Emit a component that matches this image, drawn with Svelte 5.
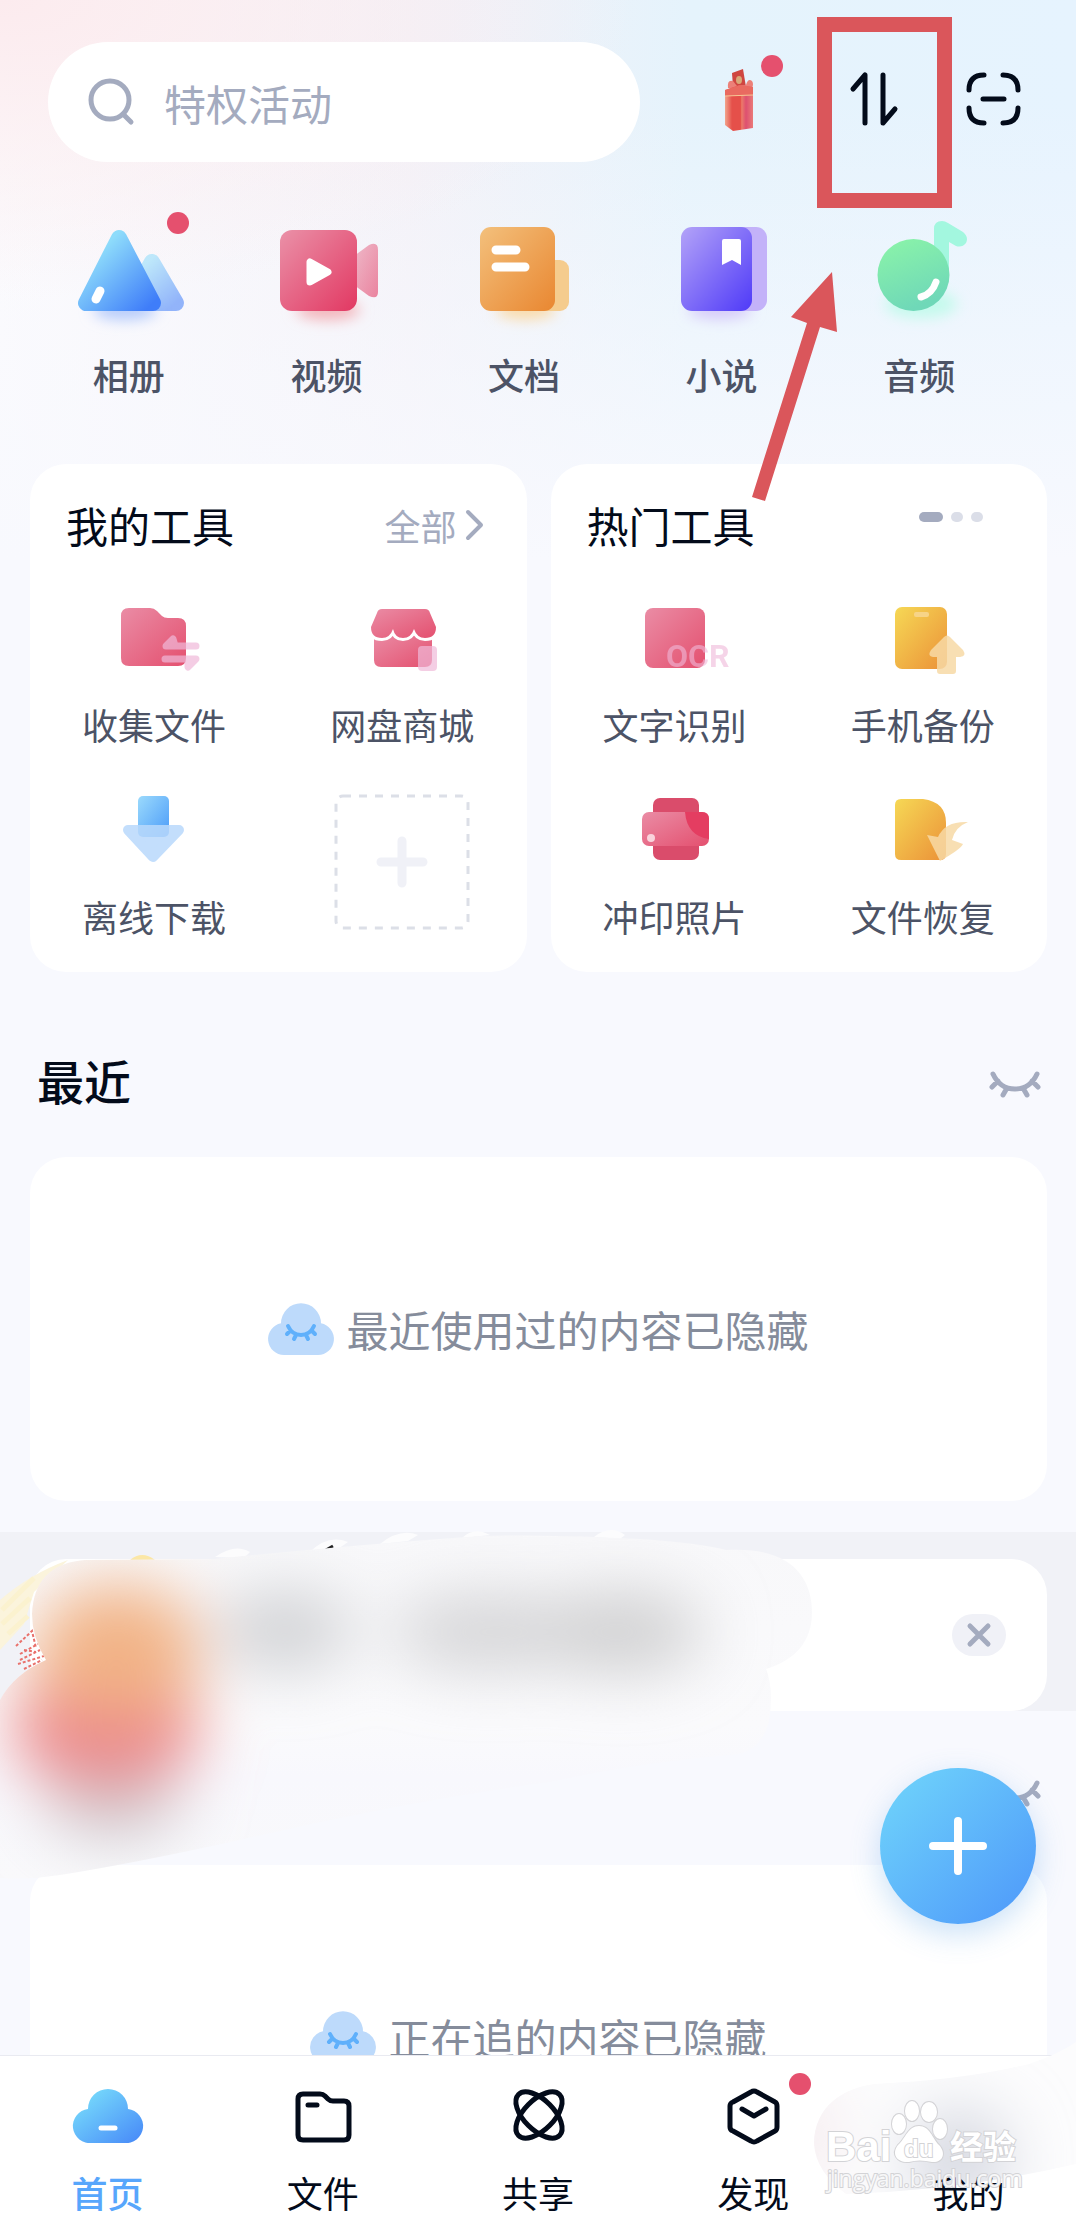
<script>
	const shortcuts = [
		{ id: 'photo', label: '相册', badge: true },
		{ id: 'video', label: '视频' },
		{ id: 'doc', label: '文档' },
		{ id: 'novel', label: '小说' },
		{ id: 'audio', label: '音频' }
	];
	const myTools = [
		{ id: 'collect', label: '收集文件' },
		{ id: 'shop', label: '网盘商城' },
		{ id: 'download', label: '离线下载' }
	];
	const hotTools = [
		{ id: 'ocr', label: '文字识别' },
		{ id: 'backup', label: '手机备份' },
		{ id: 'print', label: '冲印照片' },
		{ id: 'restore', label: '文件恢复' }
	];
	const tabs = [
		{ id: 'home', label: '首页' },
		{ id: 'files', label: '文件' },
		{ id: 'share', label: '共享' },
		{ id: 'discover', label: '发现', badge: true },
		{ id: 'mine', label: '我的' }
	];
	let current = $state('home');
	let keyword = $state('');
</script>

{#snippet eye()}
	<svg class="eye" viewBox="0 0 52 26">
		<path d="M4 3Q11 18 26 18Q41 18 48 3M9 10L3 16M18 17L14 24M34 17L38 24M43 10L49 16" />
	</svg>
{/snippet}

{#snippet hiddenTip(text)}
	<div class="panel">
		<svg class="cloud" viewBox="0 0 66 52">
			<path d="M16 52A16 16 0 0 1 13 20.3A20 20 0 0 1 53 20.3A16 16 0 0 1 50 52Z" fill="#bddafb" />
			<path
				d="M20 23Q24 32 33 32Q42 32 46 23M22 28L19 31M28 32L26 36M38 32L40 36M44 28L47 31"
				fill="none"
				stroke="#5fb0fb"
				stroke-width="4"
				stroke-linecap="round"
			/>
		</svg>
		<span>{text}</span>
	</div>
{/snippet}

{#snippet toolIcon(id)}
	<svg class="tool-icon" viewBox="0 0 100 80">
		{#if id === 'collect'}
			<path d="M25 8H46Q50 8 53 11L58 16Q60 18 64 18H74Q82 18 82 26V58Q82 66 74 66H25Q17 66 17 58V16Q17 8 25 8Z" fill="url(#pink)" />
			<g opacity="0.7" fill="#f0b9d9" stroke="#f0b9d9" stroke-width="7" stroke-linecap="round" stroke-linejoin="round">
				<path d="M92 46H62L69 39L71 46" />
				<path d="M61 59H92L84 67L84 59" />
			</g>
		{:else if id === 'shop'}
			<path d="M22 34H80V60Q80 67 73 67H29Q22 67 22 60Z" fill="url(#pink)" />
			<path
				class="awning"
				d="M30 9H73Q77 9 78 13L84 27Q84 38 73 38Q65 38 62 29Q59 38 51 38Q43 38 41 29Q38 38 30 38Q19 38 19 27L25 13Q26 9 30 9Z"
				fill="url(#pink)"
			/>
			<rect x="66" y="46" width="19" height="25" rx="4" fill="#f0b9d9" opacity="0.7" />
		{:else if id === 'download'}
			<rect x="34" y="4" width="31" height="41" rx="5" fill="url(#sky)" />
			<path d="M24 38H75L49 65Z" class="funnel" />
		{:else if id === 'ocr'}
			<rect x="20" y="8" width="60" height="60" rx="8" fill="url(#pink)" />
			<text x="41" y="67">OCR</text>
		{:else if id === 'backup'}
			<rect x="22" y="7" width="52" height="62" rx="7" fill="url(#gold)" />
			<rect x="41" y="12" width="15" height="5" rx="2" fill="#f7d487" />
			<path d="M71 37Q74 34 77 37L90 50Q94 56 87 57H83V71Q83 74 80 74H67Q64 74 64 71V57H60Q54 56 58 50Z" fill="#f7d9a6" opacity="0.85" />
		{:else if id === 'print'}
			<rect x="28" y="6" width="46" height="62" rx="7" fill="#da4c6b" />
			<rect x="17" y="20" width="67" height="34" rx="7" fill="url(#pink)" />
			<path d="M60 20H77Q84 20 84 27V47Q62 44 60 20Z" fill="#e43d61" />
			<circle cx="26" cy="46" r="4" fill="#f9d3dc" />
		{:else if id === 'restore'}
			<path d="M28 7H50Q73 10 73 31V62Q73 68 67 68H28Q22 68 22 62V13Q22 7 28 7Z" fill="url(#gold)" />
			<path d="M95 30Q82 35 79 48L90 52Q88 57 67 69L54 43L65 45Q72 29 95 30Z" fill="#f7d9a6" opacity="0.85" />
		{/if}
	</svg>
{/snippet}

<svg class="defs" width="0" height="0" aria-hidden="true">
	<defs>
		<linearGradient id="blue" x1="0" y1="0" x2="1" y2="1">
			<stop offset="0.2" stop-color="#8edcfb" /><stop offset="1" stop-color="#3f7df9" />
		</linearGradient>
		<linearGradient id="sky" x1="0" y1="0" x2="1" y2="1">
			<stop offset="0" stop-color="#9bdafc" /><stop offset="1" stop-color="#4b9bf9" />
		</linearGradient>
		<linearGradient id="cloudFill" x1="0" y1="0" x2="1" y2="1">
			<stop offset="0.15" stop-color="#75d8fb" /><stop offset="1" stop-color="#4687f8" />
		</linearGradient>
		<linearGradient id="red" x1="0" y1="0" x2="1" y2="1">
			<stop offset="0" stop-color="#ea91a8" /><stop offset="1" stop-color="#e23862" />
		</linearGradient>
		<linearGradient id="pink" x1="0" y1="0" x2="1" y2="1">
			<stop offset="0" stop-color="#ea8ca5" /><stop offset="1" stop-color="#e4506f" />
		</linearGradient>
		<linearGradient id="orange" x1="0" y1="0" x2="1" y2="1">
			<stop offset="0" stop-color="#f3c07c" /><stop offset="1" stop-color="#e98731" />
		</linearGradient>
		<linearGradient id="gold" x1="0" y1="0" x2="1" y2="1">
			<stop offset="0" stop-color="#f6d855" /><stop offset="1" stop-color="#eb9138" />
		</linearGradient>
		<linearGradient id="purple" x1="0" y1="0" x2="1" y2="1">
			<stop offset="0" stop-color="#b3a3f8" /><stop offset="1" stop-color="#4f3af8" />
		</linearGradient>
		<linearGradient id="green" x1="0" y1="0" x2="0.4" y2="1">
			<stop offset="0" stop-color="#8cf5a8" /><stop offset="1" stop-color="#6fd8b8" />
		</linearGradient>
		<linearGradient id="box" x1="0" y1="0" x2="1" y2="0">
			<stop offset="0" stop-color="#f2a48c" /><stop offset="0.25" stop-color="#e5504a" />
			<stop offset="0.55" stop-color="#e5504a" /><stop offset="0.6" stop-color="#ec7a6a" />
			<stop offset="0.75" stop-color="#dd5070" /><stop offset="1" stop-color="#ea7a78" />
		</linearGradient>
		<linearGradient id="paper" x1="0" y1="0" x2="0" y2="1">
			<stop offset="0" stop-color="#f8f8fa" /><stop offset="0.55" stop-color="#fafafc" />
			<stop offset="0.7" stop-color="#f8f8fd" /><stop offset="1" stop-color="#f9f9fb" />
		</linearGradient>
		<filter id="glow" x="-50%" y="-100%" width="200%" height="300%">
			<feGaussianBlur stdDeviation="7" />
		</filter>
		<filter id="smear" x="-80%" y="-120%" width="260%" height="340%">
			<feGaussianBlur stdDeviation="32" />
		</filter>
	</defs>
</svg>

<div class="app">
	<main>
		<header>
			<label class="search">
				<svg viewBox="0 0 48 48">
					<circle cx="22" cy="22" r="19" />
					<path d="M35 36L43 44" />
				</svg>
				<input type="text" placeholder="特权活动" aria-label="搜索" bind:value={keyword} />
			</label>
			<div class="actions">
				<button aria-label="礼物">
					<svg viewBox="0 0 60 60">
						<path d="M8 1L19 -3L22 15L9 15Z" fill="#cf4640" />
						<ellipse cx="15" cy="8" rx="3" ry="4" fill="#d9a877" />
						<path d="M4 16Q3 7 9 9L13 14L22 13Q24 6 28 9Q30 12 28 16Z" fill="#ec8078" />
						<path d="M1 18L16 13L29 15V56L9 59L1 53Z" fill="url(#box)" />
						<path d="M1 18L16 13L29 15V23L1 24Z" fill="#e96a60" />
						<path d="M1 24L29 23" stroke="#f7c795" stroke-width="1" />
					</svg>
					<i class="dot gift-dot"></i>
				</button>
				<button aria-label="传输列表">
					<svg viewBox="0 0 60 60">
						<path class="line" d="M9 17L21 3V51M39 3V51L51 37" />
					</svg>
				</button>
				<button aria-label="扫一扫">
					<svg viewBox="0 0 60 60">
						<path class="line" d="M5 18Q5 3 20 3M39 3Q54 3 54 18M5 36Q5 51 20 51M39 51Q54 51 54 36M19 27H40" />
					</svg>
				</button>
			</div>
		</header>

		<div class="shortcuts">
			{#each shortcuts as item}
				<button>
					<span class="pic">
						<svg viewBox="0 0 120 120">
							{#if item.id === 'photo'}
								<ellipse cx="56" cy="92" rx="32" ry="10" fill="#b5cbfb" filter="url(#glow)" />
								<g opacity="0.55"><path class="soft" d="M83 44L60 85H107Z" /></g>
								<path class="soft" d="M50 20L17 85H84Z" />
								<path d="M31 73L27 81" stroke="#fff" stroke-width="9" stroke-linecap="round" />
							{:else if item.id === 'video'}
								<ellipse cx="62" cy="92" rx="32" ry="10" fill="#f3b4ba" filter="url(#glow)" />
								<path d="M88 38L103 27Q112 23 112 32V74Q112 82 103 78L88 67Z" fill="url(#red)" opacity="0.6" />
								<rect x="14" y="12" width="77" height="81" rx="12" fill="url(#red)" />
								<path d="M44 44V64L62 54Z" fill="#fff" stroke="#fff" stroke-width="7" stroke-linejoin="round" />
							{:else if item.id === 'doc'}
								<ellipse cx="62" cy="92" rx="30" ry="9" fill="#fad9a4" filter="url(#glow)" />
								<rect x="60" y="42" width="45" height="51" rx="9" fill="#f5cc8e" />
								<rect x="16" y="9" width="75" height="84" rx="11" fill="url(#orange)" />
								<path d="M32 32H52M32 49H61" stroke="#fff" stroke-width="9" stroke-linecap="round" />
							{:else if item.id === 'novel'}
								<ellipse cx="58" cy="92" rx="32" ry="9" fill="#d4c8f9" filter="url(#glow)" />
								<rect x="50" y="9" width="55" height="84" rx="11" fill="#c3b2f9" />
								<rect x="19" y="9" width="71" height="84" rx="11" fill="url(#purple)" />
								<path d="M62 21H77Q79 21 79 23V47L70 42L60 47V23Q60 21 62 21Z" fill="#fff" />
							{:else}
								<ellipse cx="62" cy="86" rx="36" ry="14" fill="#c4faec" filter="url(#glow)" />
								<path d="M75 50V11Q75 3 83 3Q86 3 89 5L104 14Q110 19 107 25Q103 30 97 28L90 24V60Z" fill="#a3f7df" />
								<circle cx="54.5" cy="57" r="36" fill="url(#green)" />
								<path d="M77 64Q73 76 62 79" fill="none" stroke="#fff" stroke-width="7" stroke-linecap="round" />
							{/if}
						</svg>
						{#if item.badge}<i class="dot photo-dot"></i>{/if}
					</span>
					<span class="name">{item.label}</span>
				</button>
			{/each}
		</div>

		<div class="tools">
			<section class="card">
				<div class="card-head">
					<h2>我的工具</h2>
					<a href="#all">
						全部
						<svg viewBox="0 0 20 32"><path d="M3 3L16 16L3 29" /></svg>
					</a>
				</div>
				<div class="grid">
					{#each myTools as tool}
						<button>{@render toolIcon(tool.id)}<span>{tool.label}</span></button>
					{/each}
					<button aria-label="添加工具">
						<svg class="add" viewBox="0 0 140 140">
							<rect x="4" y="4" width="132" height="132" rx="7" />
							<path d="M70 49V91M49 70H91" />
						</svg>
					</button>
				</div>
			</section>
			<section class="card">
				<div class="card-head">
					<h2>热门工具</h2>
					<div class="pager"><i class="on"></i><i></i><i></i></div>
				</div>
				<div class="grid">
					{#each hotTools as tool}
						<button>{@render toolIcon(tool.id)}<span>{tool.label}</span></button>
					{/each}
				</div>
			</section>
		</div>

		<div class="section-head">
			<h1>最近</h1>
			<button aria-label="显示最近">{@render eye()}</button>
		</div>
		{@render hiddenTip('最近使用过的内容已隐藏')}

		<div class="promo">
			<div class="promo-card">
				<button aria-label="关闭">
					<svg viewBox="0 0 24 24"><path d="M3 3L21 21M21 3L3 21" /></svg>
				</button>
			</div>
			<svg class="smudge" viewBox="0 0 820 350">
				<clipPath id="brush">
					<path d="M32 82Q34 32 85 28L215 27Q340 14 480 4Q560 2 640 7Q700 11 726 18C790 14 812 45 812 80C812 110 795 128 766 137Q774 156 769 190Q762 216 740 222Q640 230 550 250Q400 270 240 308Q130 332 60 343Q30 348 0 346V168Q14 142 46 128Q32 105 32 82Z" />
				</clipPath>
				<path d="M68 28Q30 42 0 68V118L24 92L34 60Z" fill="#fbf4dc" />
				<path d="M130 28Q142 18 155 28Z" fill="#fbe7a6" />
				<path d="M2 78L34 46M2 92L30 66M8 102L28 84" stroke="#fbf2cf" stroke-width="5" />
				<path d="M215 25Q235 11 250 20L244 26ZM310 20Q328 2 348 10L338 17ZM380 12Q400 -4 418 3L408 9ZM462 6Q474 -6 490 3ZM594 5Q610 -8 625 3L620 7Z" fill="#fcfcfd" />
				<path d="M326 18L333 14" stroke="#222" stroke-width="3" />
				<path
					d="M16 114L32 99L36 116M20 122L38 112M24 118L36 120M18 132L44 124M20 128L40 118M24 137L42 128"
					fill="none"
					stroke="#e9716c"
					stroke-width="2"
					stroke-dasharray="3 2"
				/>
				<g clip-path="url(#brush)">
					<rect width="820" height="350" fill="url(#paper)" />
					<g filter="url(#smear)">
						<ellipse cx="113" cy="268" rx="68" ry="40" fill="#d0cbcf" />
						<ellipse cx="106" cy="196" rx="94" ry="60" fill="#ec878b" />
						<ellipse cx="118" cy="118" rx="84" ry="66" fill="#f2b386" />
						<ellipse cx="285" cy="98" rx="68" ry="38" fill="#cfd0d3" />
						<ellipse cx="490" cy="100" rx="100" ry="36" fill="#d3d3d5" />
						<ellipse cx="620" cy="100" rx="84" ry="40" fill="#cfcfd0" />
					</g>
				</g>
			</svg>
		</div>

		<div class="section-head tight">
			<button aria-label="显示正在追">{@render eye()}</button>
		</div>
		{@render hiddenTip('正在追的内容已隐藏')}
	</main>

	<nav>
		{#each tabs as tab}
			<button class:active={current === tab.id} onclick={() => (current = tab.id)}>
				<span class="pic">
					<svg class="tab-icon" viewBox="0 0 68 60">
						{#if tab.id === 'home'}
							<path d="M18 57A17 17 0 0 1 14 23A20 20 0 0 1 54 23A17 17 0 0 1 50 57Z" fill="url(#cloudFill)" />
							<path d="M27 42H41" stroke="#fff" stroke-width="5" stroke-linecap="round" />
						{:else if tab.id === 'files'}
							<path class="line" d="M14 8H31Q34 8 36 10L39 13Q41 15 44 15H55Q60 15 60 20V49Q60 54 55 54H14Q9 54 9 49V13Q9 8 14 8ZM19 19H28" />
						{:else if tab.id === 'share'}
							<g class="line">
								<ellipse cx="35" cy="29" rx="29" ry="15" transform="rotate(45 35 29)" />
								<ellipse cx="35" cy="29" rx="29" ry="15" transform="rotate(-45 35 29)" />
							</g>
						{:else if tab.id === 'discover'}
							<path class="line" d="M32 6Q35 4 38 6L56 16Q58 17 58 20V41Q58 44 56 45L38 55Q35 57 32 55L14 45Q11 44 11 41V20Q11 17 14 16ZM23 23L35 30L47 23" />
						{/if}
					</svg>
					{#if tab.badge}<i class="dot tab-dot"></i>{/if}
				</span>
				<span class="name">{tab.label}</span>
			</button>
		{/each}
		<svg class="corner-smudge" viewBox="0 0 262 190">
			<clipPath id="cornerBrush">
				<path d="M0 118C0 80 30 62 60 58Q150 54 215 38Q245 28 262 16V138Q150 164 32 168Q2 146 0 118Z" />
			</clipPath>
			<g clip-path="url(#cornerBrush)">
				<rect width="262" height="190" fill="#fcfcfd" />
				<g filter="url(#smear)">
					<ellipse cx="-10" cy="110" rx="26" ry="50" fill="#f3e6ea" />
					<ellipse cx="145" cy="132" rx="50" ry="48" fill="#d3d6df" />
				</g>
			</g>
		</svg>
		<svg class="watermark" viewBox="0 0 200 110">
			<text class="brand" x="1" y="72">Bai</text>
			<g class="paw">
				<ellipse cx="74" cy="35" rx="7" ry="10" />
				<ellipse cx="87" cy="22" rx="7" ry="10" />
				<ellipse cx="104" cy="23" rx="8" ry="10" />
				<ellipse cx="115" cy="40" rx="7" ry="10" />
				<path d="M94 37C105 37 107 49 114 56C122 65 117 74 107 73Q94 70 84 73C72 74 66 65 73 56C81 49 83 37 94 37Z" />
			</g>
			<text class="du" x="79" y="68">du</text>
			<text class="jy" x="125" y="70">经验</text>
			<text class="url" x="2" y="98">jingyan.baidu.com</text>
		</svg>
	</nav>

	<button class="fab" aria-label="新建">
		<svg viewBox="0 0 60 60"><path d="M30 5V55M5 30H55" /></svg>
	</button>
	<div class="mark-box"></div>
	<svg class="mark-arrow" viewBox="0 0 88 230">
		<path d="M81 0L86 60L69 55L14 229L1 225L56 51L40 45Z" />
	</svg>
</div>

<style>
	:global(body) {
		background: #f8f9fe;
	}
	.app {
		position: relative;
		display: flex;
		flex-direction: column;
		height: 100vh;
		overflow: hidden;
		font-family: 'Noto Sans CJK SC', sans-serif;
		color: #030b1a;
		background:
			radial-gradient(ellipse 640px 300px at 0 0, #fcebee, rgba(252, 235, 238, 0)),
			linear-gradient(to bottom, rgba(248, 249, 254, 0) 100px, #f8f9fe 560px),
			linear-gradient(to right, #fcfbfd 0, #f3f1f7 38%, #e5f3fc 64%, #e6f3fe 100%);
	}
	.defs {
		position: absolute;
	}
	svg {
		display: block;
		overflow: visible;
	}
	button {
		padding: 0;
		border: 0;
		background: none;
		font: inherit;
		color: inherit;
		cursor: pointer;
	}
	h1,
	h2 {
		margin: 0;
	}
	main {
		flex: 1;
		min-height: 0;
		overflow: hidden;
	}
	.line {
		fill: none;
		stroke: #030b1a;
		stroke-width: 5;
		stroke-linecap: round;
		stroke-linejoin: round;
	}
	.dot {
		position: absolute;
		width: 22px;
		height: 22px;
		border-radius: 50%;
		background: #e5506e;
	}

	/* header */
	header {
		display: flex;
		align-items: center;
		gap: 84px;
		padding: 42px 52px 0 48px;
	}
	.search {
		flex: 1;
		display: flex;
		align-items: center;
		gap: 28px;
		min-width: 0;
		height: 120px;
		padding: 0 40px;
		box-sizing: border-box;
		border-radius: 60px;
		background: #fff;
	}
	.search svg {
		flex: none;
		width: 48px;
		height: 48px;
		fill: none;
		stroke: #a4abbf;
		stroke-width: 5;
		stroke-linecap: round;
	}
	.search input {
		flex: 1;
		min-width: 0;
		padding: 0;
		border: 0;
		outline: 0;
		background: none;
		font: inherit;
		font-size: 42px;
		color: #030b1a;
	}
	.search input::placeholder {
		color: #a4abbf;
		opacity: 1;
	}
	.actions {
		display: flex;
		gap: 60px;
	}
	.actions button {
		position: relative;
	}
	.actions svg {
		width: 60px;
		height: 60px;
	}
	.gift-dot {
		top: -17px;
		right: 1px;
	}

	/* shortcuts */
	.shortcuts {
		display: grid;
		grid-template-columns: repeat(5, 1fr);
		padding: 56px 58px 0 30px;
	}
	.shortcuts button {
		display: flex;
		flex-direction: column;
		align-items: center;
		gap: 18px;
	}
	.pic {
		position: relative;
	}
	.shortcuts svg {
		width: 120px;
		height: 120px;
	}
	.soft {
		fill: url(#blue);
		stroke: url(#blue);
		stroke-width: 16;
		stroke-linejoin: round;
	}
	.photo-dot {
		top: -6px;
		right: 0;
	}
	.name {
		font-size: 36px;
		line-height: 36px;
	}
	.shortcuts .name {
		font-weight: 500;
		color: #4c5366;
	}

	/* tool cards */
	.tools {
		display: grid;
		grid-template-columns: 1fr 1fr;
		gap: 24px;
		padding: 72px 29px 0 30px;
	}
	.card {
		padding: 34px 0 36px;
		border-radius: 36px;
		background: #fff;
	}
	.card-head {
		display: flex;
		justify-content: space-between;
		padding: 0 42px 48px 36px;
	}
	.card-head h2 {
		font-size: 42px;
		font-weight: 400;
		line-height: 54px;
	}
	.card-head a {
		display: flex;
		align-items: center;
		gap: 8px;
		font-size: 36px;
		line-height: 54px;
		color: #a4abbf;
		text-decoration: none;
	}
	.card-head a svg {
		width: 20px;
		height: 32px;
		fill: none;
		stroke: #a4abbf;
		stroke-width: 4;
		stroke-linecap: round;
		stroke-linejoin: round;
	}
	.pager {
		display: flex;
		gap: 8px;
		padding: 14px 22px 0 0;
	}
	.pager i {
		width: 12px;
		height: 10px;
		border-radius: 5px;
		background: #dbdee8;
	}
	.pager .on {
		width: 24px;
		background: #a4abbf;
	}
	.grid {
		display: grid;
		grid-template-columns: 1fr 1fr;
		row-gap: 48px;
	}
	.grid button {
		display: flex;
		flex-direction: column;
		align-items: center;
		gap: 26px;
		height: 144px;
		font-size: 36px;
		line-height: 36px;
		color: #4c5366;
	}
	.tool-icon {
		width: 100px;
		height: 80px;
	}
	.tool-icon text {
		font: 700 32px Roboto, sans-serif;
		fill: #f0b9d9;
		opacity: 0.6;
	}
	.awning {
		stroke: #fff;
		stroke-width: 6;
		paint-order: stroke;
	}
	.funnel {
		fill: #b9d9fc;
		stroke: #b9d9fc;
		stroke-width: 10;
		stroke-linejoin: round;
		opacity: 0.85;
	}
	.add {
		width: 140px;
		height: 140px;
		fill: none;
		stroke: #dcdfe7;
		stroke-width: 3;
		stroke-dasharray: 8 8;
	}
	.add path {
		stroke: #f0f1f7;
		stroke-width: 9;
		stroke-linecap: round;
		stroke-dasharray: none;
	}

	/* sections */
	.section-head {
		display: flex;
		align-items: center;
		justify-content: space-between;
		height: 60px;
		padding: 78px 35px 47px 37px;
	}
	.section-head h1 {
		font-size: 47px;
		font-weight: 500;
		line-height: 60px;
	}
	.section-head button {
		padding-top: 8px;
	}
	.section-head.tight {
		justify-content: flex-end;
		padding-top: 48px;
		padding-bottom: 46px;
	}
	.eye {
		width: 52px;
		height: 26px;
		fill: none;
		stroke: #a4abbf;
		stroke-width: 5;
		stroke-linecap: round;
	}
	.panel {
		display: flex;
		align-items: center;
		justify-content: center;
		gap: 12px;
		height: 344px;
		margin: 0 29px 0 30px;
		border-radius: 36px;
		background: #fff;
		font-size: 42px;
		line-height: 54px;
		color: #858c9b;
	}
	.cloud {
		width: 66px;
		height: 52px;
	}
	.promo {
		position: relative;
		margin-top: 31px;
		padding: 27px 29px 0 30px;
		background: #f1f2f7;
	}
	.promo-card {
		display: flex;
		align-items: center;
		justify-content: flex-end;
		height: 152px;
		padding-right: 41px;
		border-radius: 36px;
		background: #fff;
	}
	.promo-card button {
		display: grid;
		place-items: center;
		width: 54px;
		height: 42px;
		border-radius: 21px;
		background: #f0f1f7;
	}
	.promo-card svg {
		width: 24px;
		height: 24px;
		stroke: #a4abbf;
		stroke-width: 5;
		stroke-linecap: round;
	}
	.promo .smudge {
		position: absolute;
		top: 0;
		left: 0;
		z-index: 1;
		width: 820px;
		height: 350px;
		pointer-events: none;
	}

	/* bottom tabs */
	nav {
		position: relative;
		display: grid;
		grid-template-columns: repeat(5, 1fr);
		padding: 30px 0 6px;
		border-top: 1px solid #e9eaf1;
		background: #fff;
	}
	nav button {
		display: flex;
		flex-direction: column;
		align-items: center;
		gap: 28px;
	}
	.tab-icon {
		width: 68px;
		height: 60px;
	}
	nav .name {
		position: relative;
		z-index: 1;
	}
	.active .name {
		font-weight: 500;
		color: #57a6fc;
	}
	.tab-dot {
		top: -13px;
		right: -24px;
	}
	.corner-smudge {
		position: absolute;
		right: 0;
		bottom: 0;
		width: 262px;
		height: 190px;
		pointer-events: none;
	}
	.watermark {
		position: absolute;
		right: 51px;
		bottom: 17px;
		z-index: 2;
		width: 200px;
		height: 110px;
		pointer-events: none;
	}
	.watermark text,
	.paw {
		fill: #fff;
		stroke: #d3d3d6;
		stroke-width: 2;
		paint-order: stroke;
	}
	.watermark .brand {
		font: 700 42px 'Liberation Sans', sans-serif;
	}
	.watermark .du {
		font: 700 24px 'Liberation Sans', sans-serif;
	}
	.watermark .jy {
		font: 700 33px 'Noto Sans CJK SC', sans-serif;
	}
	.watermark .url {
		font: 400 23px 'Open Sans', sans-serif;
		fill: #f7f7f8;
	}

	.fab {
		position: absolute;
		right: 40px;
		bottom: 292px;
		z-index: 2;
		display: grid;
		place-items: center;
		width: 156px;
		height: 156px;
		border-radius: 50%;
		background: linear-gradient(135deg, #6dd0fb 10%, #4f9afa 95%);
		box-shadow: 0 10px 30px rgba(80, 155, 230, 0.3);
	}
	.fab svg {
		width: 60px;
		height: 60px;
		stroke: #fff;
		stroke-width: 8;
		stroke-linecap: round;
	}
	.mark-box {
		position: absolute;
		top: 17px;
		right: 124px;
		width: 135px;
		height: 191px;
		box-sizing: border-box;
		border: 15px solid #da565b;
		pointer-events: none;
	}
	.mark-arrow {
		position: absolute;
		top: 272px;
		right: 237px;
		width: 88px;
		height: 230px;
		fill: #da565b;
		pointer-events: none;
	}
</style>
